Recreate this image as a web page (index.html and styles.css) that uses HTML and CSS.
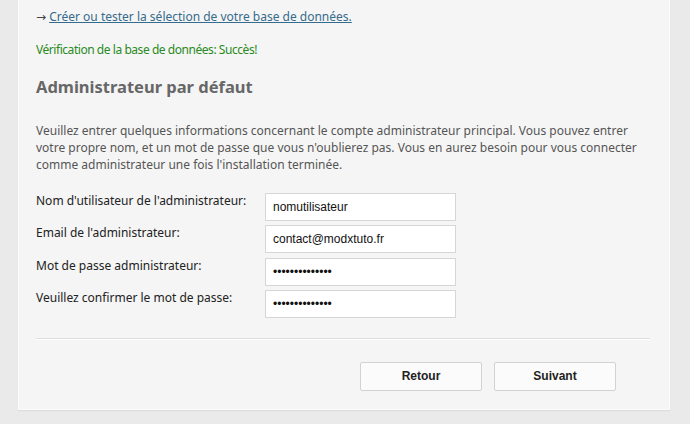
FILE: index.html
```html
<!DOCTYPE html>
<html lang="fr">
<head>
<meta charset="utf-8">
<title>Administrateur par défaut</title>
<link rel="stylesheet" href="styles.css">
</head>
<body>
<div class="panel">
  <p class="link-line">→ <a href="#">Créer ou tester la sélection de votre base de données.</a></p>
  <p class="success">Vérification de la base de données: Succès!</p>
  <h2 class="title">Administrateur par défaut</h2>
  <p class="intro">Veuillez entrer quelques informations concernant le compte administrateur principal. Vous pouvez entrer<br>votre propre nom, et un mot de passe que vous n'oublierez pas. Vous en aurez besoin pour vous connecter<br>comme administrateur une fois l'installation terminée.</p>
  <div class="form">
    <label class="lbl">Nom d'utilisateur de l'administrateur:</label>
    <input class="field" type="text" value="nomutilisateur">
    <label class="lbl">Email de l'administrateur:</label>
    <input class="field" type="text" value="contact@modxtuto.fr">
    <label class="lbl">Mot de passe administrateur:</label>
    <input class="field" type="password" value="motdepasse1234">
    <label class="lbl">Veuillez confirmer le mot de passe:</label>
    <input class="field" type="password" value="motdepasse1234">
  </div>
  <hr class="sep">
  <div class="actions">
    <button class="btn" type="button">Retour</button>
    <button class="btn" type="button">Suivant</button>
  </div>
</div>
</body>
</html>
```
FILE: styles.css
```css
html, body {
  margin: 0;
  padding: 0;
}
body {
  background: #eaeaea;
  font-family: "Noto Sans", "DejaVu Sans", sans-serif;
  font-size: 12px;
  color: #333;
  height: 424px;
  overflow: hidden;
}
.panel {
  margin-left: 18px;
  width: 614px;
  background: #f5f5f5;
  border: 1px solid #fbfbfb;
  border-top: none;
  box-shadow: 0 1px 1px rgba(0,0,0,0.06);
  padding: 8px 19px 18px 17px;
}
.link-line {
  margin: 0;
  line-height: 17px;
  color: #444;
}
.link-line a {
  color: #356b8c;
  text-decoration: underline;
}
.success {
  margin: 16px 0 0;
  font-size: 12px;
  letter-spacing: -0.45px;
  line-height: 17px;
  color: #2a8a22;
}
.title {
  margin: 18px 0 0;
  font-size: 16.5px;
  line-height: 22px;
  font-weight: bold;
  color: #676767;
}
.intro {
  margin: 24px 0 0;
  line-height: 17px;
  color: #555;
  white-space: nowrap;
}
.form {
  margin-top: 20px;
  display: grid;
  grid-template-columns: 229px 191px;
  row-gap: 4.3px;
}
.lbl {
  line-height: 17px;
  margin-top: -1px;
  color: #222;
}
.field {
  box-sizing: border-box;
  height: 28px;
  width: 191px;
  margin: 0;
  padding: 0 7px;
  border: 1px solid #d6d6d6;
  background: #fff;
  font-family: "Liberation Sans", Arial, sans-serif;
  font-size: 12px;
  color: #111;
  outline: none;
}
.sep {
  margin: 20px 0 0;
  border: 0;
  border-top: 1px solid #dedede;
  border-bottom: 1px solid #fff;
  height: 0;
}
.actions {
  margin-top: 22px;
  display: flex;
  justify-content: flex-end;
  gap: 12px;
  padding-right: 34px;
}
.btn {
  box-sizing: border-box;
  width: 122px;
  height: 29px;
  margin: 0;
  border: 1px solid #d2d2d2;
  border-radius: 2px;
  background: #fbfbfb;
  font-family: "Liberation Sans", Arial, sans-serif;
  font-size: 12px;
  font-weight: bold;
  color: #222;
}
```
